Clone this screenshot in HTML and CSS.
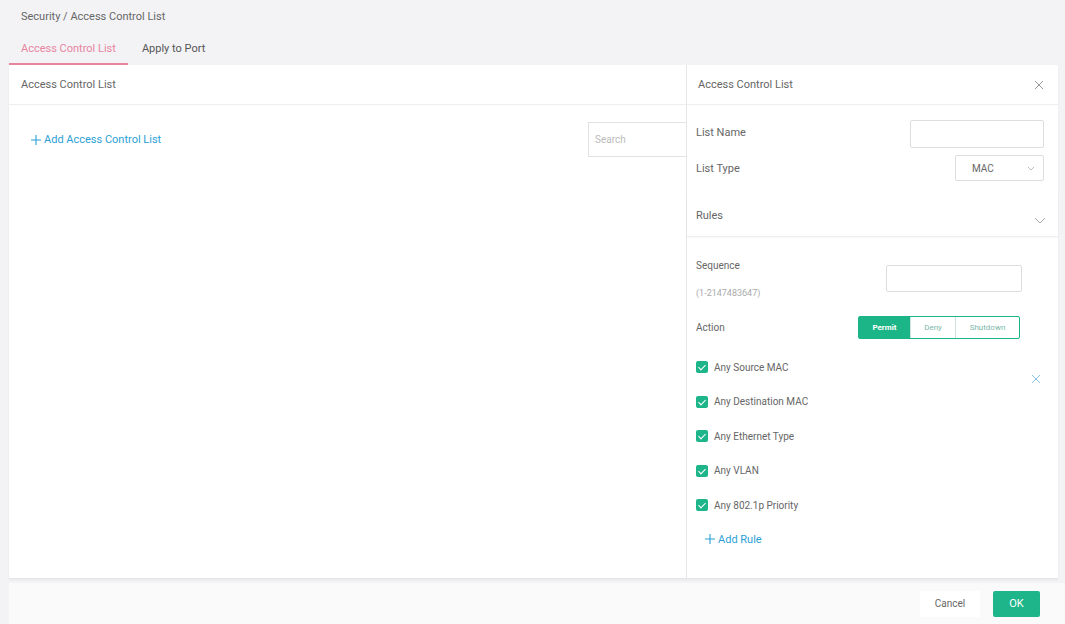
FILE: index.html
```html
<!DOCTYPE html>
<html>
<head>
<meta charset="utf-8">
<link rel="stylesheet" href="styles.css">
</head>
<body>
<div class="page">
  <div class="top">
    <div class="crumb">Security / Access Control List</div>
    <div class="tabs">
      <div class="tab active">Access Control List</div>
      <div class="tab">Apply to Port</div>
    </div>
  </div>
  <div class="card">
    <div class="body">
      <div class="main">
        <div class="head">Access Control List</div>
        <div class="toolbar">
          <div class="link">
            <svg width="12" height="12" viewBox="0 0 12 12"><path d="M6 1v10M1 6h10" stroke="#2b9fd6" stroke-width="1.1" fill="none"/></svg>
            <span>Add Access Control List</span>
          </div>
          <div class="search">Search</div>
        </div>
      </div>
      <div class="drawer">
        <div class="dhead">
          <span>Access Control List</span>
          <svg width="10" height="10" viewBox="0 0 10 10"><path d="M1 1l8 8M9 1l-8 8" stroke="#999" stroke-width="1" fill="none"/></svg>
        </div>
        <div class="form">
          <div class="row r-name">
            <span>List Name</span>
            <div class="input w-name"></div>
          </div>
          <div class="row r-type">
            <span>List Type</span>
            <div class="select">
              <span>MAC</span>
              <svg width="8" height="5" viewBox="0 0 8 5"><path d="M1 1l3 3 3-3" stroke="#bbb" stroke-width="1" fill="none"/></svg>
            </div>
          </div>
          <div class="row rules">
            <span>Rules</span>
            <svg class="chev" width="12" height="7" viewBox="0 0 12 7"><path d="M1 1l5 5 5-5" stroke="#aaa" stroke-width="1" fill="none"/></svg>
          </div>
          <div class="rule">
            <div class="rulebody">
              <div class="seq">
                <div class="seqlabels">
                  <span>Sequence</span>
                  <span class="hint">(1-2147483647)</span>
                </div>
                <div class="input w-seq"></div>
              </div>
              <div class="action">
                <span>Action</span>
                <div class="seg">
                  <div class="opt on">Permit</div>
                  <div class="opt">Deny</div>
                  <div class="opt">Shutdown</div>
                </div>
              </div>
              <div class="checks">
                <div class="check"><i class="box"></i><span>Any Source MAC</span></div>
                <div class="check"><i class="box"></i><span>Any Destination MAC</span></div>
                <div class="check"><i class="box"></i><span>Any Ethernet Type</span></div>
                <div class="check"><i class="box"></i><span>Any VLAN</span></div>
                <div class="check"><i class="box"></i><span>Any 802.1p Priority</span></div>
              </div>
            </div>
            <div class="del">
              <svg width="10" height="10" viewBox="0 0 10 10"><path d="M1 1l8 8M9 1l-8 8" stroke="#8cc6df" stroke-width="1" fill="none"/></svg>
            </div>
          </div>
          <div class="link addrule">
            <svg width="12" height="12" viewBox="0 0 12 12"><path d="M6 1v10M1 6h10" stroke="#2b9fd6" stroke-width="1.1" fill="none"/></svg>
            <span>Add Rule</span>
          </div>
        </div>
      </div>
    </div>
  </div>
  <div class="footer">
    <div class="btn cancel">Cancel</div>
    <div class="btn ok">OK</div>
  </div>
</div>
</body>
</html>
```
FILE: styles.css
```css
* { box-sizing: border-box; }
html, body { margin: 0; padding: 0; }
body {
  font-family: Roboto, "Liberation Sans", sans-serif;
  font-size: 11px;
  color: #666;
  background: #f3f3f6;
}
.page {
  width: 1065px;
  height: 624px;
  display: flex;
  flex-direction: column;
  overflow: hidden;
}
.top { padding-left: 9px; }
.crumb {
  height: 34px;
  line-height: 34px;
  padding-left: 12px;
  color: #666;
}
.tabs { display: flex; height: 31px; }
.tab {
  padding: 0 12px;
  line-height: 30px;
  color: #555;
}
.tab.active {
  color: #e8849e;
  border-bottom: 2px solid #e8849e;
  margin-right: 2px;
}
.card {
  margin: 0 7px 0 9px;
  background: #fff;
  height: 514px;
  border-bottom: 1px solid #e6e6e6;
  box-shadow: 0 1px 2px rgba(0,0,0,0.05);
  display: flex;
  flex-direction: column;
}
.body { display: flex; flex: 1; }
.main { flex: 1; }
.head {
  height: 40px;
  line-height: 40px;
  padding-left: 12px;
  border-bottom: 1px solid #eee;
  color: #666;
}
.toolbar {
  display: flex;
  justify-content: space-between;
  align-items: center;
  padding: 17px 0 0 21px;
}
.link {
  display: flex;
  align-items: center;
  gap: 2px;
  color: #2b9fd6;
  font-size: 11px;
}
.search {
  width: 98px;
  height: 35px;
  border: 1px solid #e2e2e2;
  border-right: none;
  line-height: 33px;
  padding-left: 6px;
  color: #bbb;
  font-size: 10px;
}
.drawer {
  width: 372px;
  border-left: 1px solid #e6e6e6;
  display: flex;
  flex-direction: column;
}
.dhead {
  height: 40px;
  display: flex;
  justify-content: space-between;
  align-items: center;
  padding: 0 14px 0 11px;
  border-bottom: 1px solid #eee;
}
.form { padding: 15px 0 0 9px; }
.row {
  display: flex;
  justify-content: space-between;
  align-items: center;
  padding-right: 14px;
}
.r-name { height: 28px; }
.r-name span { margin-top: -4px; }
.r-type { height: 26px; margin-top: 7px; }
.input {
  border: 1px solid #ddd;
  border-radius: 2px;
  background: #fff;
}
.w-name { width: 134px; height: 28px; }
.select {
  width: 89px;
  height: 26px;
  border: 1px solid #ddd;
  border-radius: 2px;
  display: flex;
  justify-content: space-between;
  align-items: center;
  padding: 0 8px 0 16px;
  font-size: 10px;
}
.rules {
  height: 42px;
  margin-top: 14px;
  margin-left: -9px;
  padding-left: 9px;
  padding-right: 12px;
  border-bottom: 1px solid #eee;
  box-shadow: 0 1px 2px rgba(0,0,0,0.03);
}
.chev { margin-top: 10px; }
.rule { display: flex; }
.rulebody { width: 326px; }
.seq {
  display: flex;
  justify-content: space-between;
  align-items: flex-start;
  padding-top: 23px;
}
.seqlabels { display: flex; flex-direction: column; gap: 17px; font-size: 10px; }
.hint { color: #aaa; font-size: 9px; }
.w-seq { width: 136px; height: 27px; margin-top: 5px; }
.action {
  display: flex;
  justify-content: space-between;
  align-items: center;
  margin-top: 18px;
  font-size: 10px;
}
.seg {
  display: flex;
  height: 23px;
  border: 1px solid #1cb588;
  border-radius: 2px;
  margin-right: 2px;
}
.opt {
  font-size: 8px;
  color: #7cb8a8;
  padding: 0 8px;
  line-height: 21px;
  border-left: 1px solid #cde3dc;
}
.opt:first-child { border-left: none; }
.opt.on {
  background: #1cb588;
  color: #fff;
  width: 51px;
  text-align: center;
  font-weight: bold;
}
.opt:nth-child(2) { width: 45px; text-align: center; }
.opt:nth-child(3) { width: 64px; text-align: center; }
.checks { padding-top: 11px; }
.check {
  display: flex;
  align-items: center;
  height: 34.5px;
  gap: 6px;
  font-size: 10px;
}
.box {
  display: block;
  width: 12px;
  height: 12px;
  border-radius: 2px;
  background: #1fb58a;
  position: relative;
}
.box::after {
  content: "";
  position: absolute;
  left: 4px;
  top: 2px;
  width: 3px;
  height: 6px;
  border: solid #fff;
  border-width: 0 1.5px 1.5px 0;
  transform: rotate(45deg);
}
.del { padding: 137px 0 0 9px; }
.addrule { margin: 10px 0 0 8px; }
.footer {
  flex: 1;
  margin: 4px 0 0 9px;
  background: #fafafa;
  display: flex;
  justify-content: flex-end;
  align-items: center;
  padding-right: 25px;
  gap: 13px;
}
.btn {
  height: 26px;
  line-height: 26px;
  text-align: center;
  border-radius: 2px;
  font-size: 10px;
}
.cancel { width: 60px; background: #fff; color: #666; }
.ok { width: 47px; background: #1fb58a; color: #fff; font-size: 11px; }
```
